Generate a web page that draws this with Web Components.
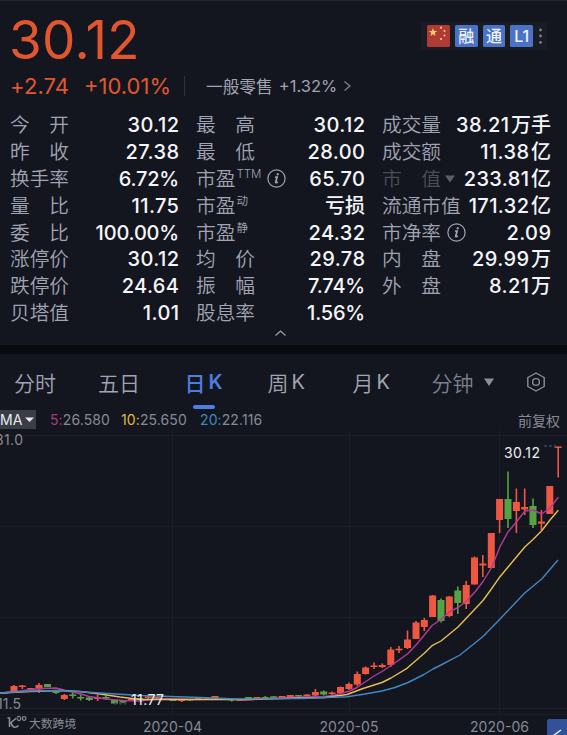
<!DOCTYPE html>
<html lang="zh-CN">
<head>
<meta charset="utf-8">
<title>30.12</title>
<style>
    html, body {
        margin: 0;
        background: #14161f;
    }
    body {
        width: 567px;
        height: 735px;
        overflow: hidden;
        font-family: Inter, "Noto Sans CJK SC", sans-serif;
        color: #a0a4b3;
    }
</style>
</head>
<body>
<stock-page></stock-page>

<template id="page">
    <style>
        :host {
            display: flex;
            flex-direction: column;
            width: 567px;
            height: 735px;
        }
        .gap {
            flex: none;
            height: 9px;
            background: #0a0b10;
        }
        .top {
            flex: none;
            height: 345px;
            box-sizing: border-box;
            border-top: 1px solid #242730;
        }
    </style>
    <div class="top">
        <quote-header price="30.12" change="+2.74" percent="+10.01%">
            <span slot="sector">一般零售</span>
            <span slot="sector-change">+1.32%</span>
            <quote-badge slot="badges" flag></quote-badge>
            <quote-badge slot="badges">融</quote-badge>
            <quote-badge slot="badges">通</quote-badge>
            <quote-badge slot="badges">L1</quote-badge>
        </quote-header>
        <stats-grid></stats-grid>
    </div>
    <div class="gap"></div>
    <period-tabs active="日K"></period-tabs>
    <ma-legend></ma-legend>
    <k-chart></k-chart>
</template>

<template id="header">
    <style>
        :host {
            display: block;
            height: 110px;
            color: #e2562f;
        }
        .row {
            display: flex;
            align-items: center;
        }
        .first {
            height: 70px;
            padding: 0 20px 0 9px;
            justify-content: space-between;
        }
        .price {
            font-size: 53px;
            letter-spacing: 0.3px;
            line-height: 70px;
            padding-top: 8px;
        }
        .badges {
            display: flex;
            align-items: center;
            gap: 5px;
            height: 28px;
            box-sizing: border-box;
            padding: 0 4px 0 6px;
            background: #1a1c24;
        }
        .second {
            height: 30px;
            padding-left: 10px;
            font-size: 22px;
        }
        .change { width: 74px; letter-spacing: 0.1px; }
        .percent { width: 100px; letter-spacing: 0; }
        .line {
            width: 1px;
            height: 20px;
            margin-right: 21px;
            background: #30333d;
        }
        .sector {
            display: flex;
            align-items: center;
            gap: 6px;
            color: #a0a4b3;
            font-size: 16.7px;
            white-space: nowrap;
        }
        .num { font-size: 16.500px; }
        .sector + svg { margin-left: 6px; }
    </style>
    <div class="row first">
        <div class="price"></div>
        <div class="badges">
            <slot name="badges"></slot>
            <svg width="5" height="18" fill="#7c7f89">
                <circle cx="2.5" cy="3" r="1.4"/><circle cx="2.5" cy="9" r="1.4"/><circle cx="2.5" cy="15.4" r="1.4"/>
            </svg>
        </div>
    </div>
    <div class="row second">
        <div class="change"></div>
        <div class="percent"></div>
        <div class="line"></div>
        <div class="sector"><slot name="sector"></slot><span class="num"><slot name="sector-change"></slot></span></div>
        <svg width="9" height="12" fill="none" stroke="#7c808c" stroke-width="1.3"><path d="M1.5 1.5 7 6 1.5 10.500"/></svg>
    </div>
</template>

<template id="badge">
    <style>
        :host {
            display: block;
            width: 22.700px;
            height: 22px;
            border-radius: 1.5px;
            background: #4a72c6;
            color: #f0f3fb;
            font-size: 16px;
            font-weight: 500;
            line-height: 22px;
            text-align: center;
        }
        :host([flag]) { background: #b03a36; }
        svg { display: none; }
        :host([flag]) svg { display: block; }
    </style>
    <slot></slot>
    <svg width="22" height="22" fill="#f2cf63">
        <path d="M6 3 7.100 6 10.200 6.100 7.700 8 8.600 11 6 9.200 3.400 11 4.300 8 1.800 6.100 4.900 6z"/>
        <circle cx="14" cy="2.700" r="1.1"/><circle cx="17.500" cy="6" r="1.1"/>
        <circle cx="17.500" cy="10.500" r="1.1"/><circle cx="14" cy="14" r="1.1"/>
    </svg>
</template>

<template id="stats">
    <style>
        :host {
            display: block;
            padding: 1px 16px 0 10px;
        }
        .grid {
            display: grid;
            grid-template-columns: repeat(3, 169px);
            column-gap: 17px;
            grid-template-rows: repeat(8, 26.800px);
            grid-auto-flow: column;
        }
        .fold {
            display: block;
            margin: 3px auto 0 264px;
        }
    </style>
    <div class="grid"></div>
    <svg class="fold" width="13" height="9" fill="none" stroke="#9a9eab" stroke-width="1.3"><path d="M1.500 6.500 6.500 2 11.500 6.500"/></svg>
</template>

<template id="stat">
    <style>
        :host {
            display: flex;
            align-items: center;
            justify-content: space-between;
            white-space: nowrap;
        }
        .name {
            display: flex;
            align-items: center;
            font-size: 19.700px;
            font-weight: 350;
            line-height: 26px;
        }
        .text { display: flex; }
        .wide .text {
            width: 59px;
            justify-content: space-between;
        }
        sup {
            align-self: flex-start;
            font-size: 11.500px;
            line-height: 16px;
            margin-left: 1px;
        }
        .value {
            display: flex;
            align-items: center;
            color: #f4f5f8;
            font-size: 20px;
            font-weight: 500;
            letter-spacing: 0.4px;
            line-height: 26px;
            margin-right: -0.4px;
        }
        .percent {
            letter-spacing: -0.2px;
            margin-right: 0;
        }
        .unit {
            letter-spacing: 0;
            margin-left: 1.500px;
            margin-right: 0.400px;
        }
        .info { margin-left: 6px; }
        .dim { color: #4b4e5a; }
        .arrow { margin-left: 4px; }
    </style>
    <div class="name"><span class="text"></span></div>
    <div class="value"></div>
</template>

<template id="tabs">
    <style>
        :host {
            display: grid;
            flex: none;
            grid-template-columns: 84px 86.500px 83px 85px 79px 94px 20px;
            align-items: center;
            height: 55px;
            padding-left: 14px;
            font-size: 21px;
            font-weight: 350;
        }
        .tab {
            display: flex;
            align-items: center;
            position: relative;
            height: 55px;
            white-space: nowrap;
        }
        .tab i {
            font-style: normal;
            font-weight: 400;
            font-size: 20px;
            margin-left: 3px;
        }
        .active {
            color: #4d7de0;
            font-weight: 500;
        }
        .active i { font-weight: 600; }
        .active::after {
            content: "";
            position: absolute;
            left: 8px;
            bottom: 0;
            width: 22px;
            height: 4px;
            border-radius: 2px;
            background: #4d7de0;
        }
        .more { color: #7c808d; }
        .more svg { margin-left: 10px; }
    </style>
</template>

<template id="legend">
    <style>
        :host {
            display: flex;
            flex: none;
            align-items: center;
            height: 21px;
            font-size: 14px;
            color: #868a97;
            letter-spacing: 0.1px;
        }
        .pick {
            display: flex;
            align-items: center;
            width: 36px;
            height: 19px;
            margin-right: 14px;
            background: #3a3d45;
            color: #e8e9ed;
            letter-spacing: 0;
        }
        .pick svg { margin-left: 3px; }
        .ma { white-space: nowrap; }
        .right {
            margin: 0 7px 0 auto;
            letter-spacing: 0;
        }
    </style>
    <div class="pick">MA<svg width="9" height="6" fill="#e8e9ed"><path d="M0 .5H9L4.500 5z"/></svg></div>
    <div class="right">前复权</div>
</template>

<template id="chart">
    <style>
        :host {
            display: block;
            flex: none;
            height: 305px;
        }
        svg { display: block; }
        text { font-family: Inter, "Noto Sans CJK SC", sans-serif; }
        .grid { stroke: #1b1e27; }
        .axis { fill: #858995; font-size: 14px; }
        .mark { fill: #eeeff3; font-size: 14px; }
        .logo { fill: #888b93; }
    </style>
    <svg width="567" height="305" viewBox="0 430 567 305">
        <g class="grid">
            <path d="M0 435.500H567M0 526.500H567M0 617.500H567M0 708.500H567M0 714.500H567"/>
            <path d="M172.500 430V714M349.500 430V714M499.500 430V714"/>
        </g>
        <g class="candles"></g>
        <g class="lines" fill="none" stroke-width="1.4" stroke-linejoin="round"></g>
        <text class="axis" x="-5" y="445" textLength="28">31.0</text>
        <text class="axis" x="-3" y="709" textLength="24">11.5</text>
        <text class="axis" x="143" y="732" textLength="59">2020-04</text>
        <text class="axis" x="319.500" y="732" textLength="59">2020-05</text>
        <text class="axis" x="470" y="732" textLength="59">2020-06</text>
        <text class="mark" x="504" y="457.500" textLength="36">30.12</text>
        <text class="mark" x="131" y="705" textLength="33">11.77</text>
        <g fill="#33415f"><circle cx="545.500" cy="446" r="1.300"/><circle cx="550.500" cy="446" r="1.300"/><circle cx="555" cy="446" r="1.300"/></g>
        <g fill="#2d5044"><circle cx="115.500" cy="703.500" r="1.200"/><circle cx="120.500" cy="703.500" r="1.200"/><circle cx="125" cy="703.500" r="1.200"/></g>
        <g fill="none" stroke="#888b93" stroke-width="1.600">
            <path d="M7.500 718H9.500V727M16.500 718 11 722.500C12 727.500 15.500 728.500 18.500 725.500"/>
            <path d="M17 717.500C19 715 21.500 717 20.500 719.500 19.500 721.500 17 720.500 17.500 718.500M26 718.500C26 721 22.300 721 22.300 718.500S26 716 26 718.500" stroke-width="1.200"/>
        </g>
        <text class="logo" x="29" y="727.500" font-size="11.800">大数跨境</text>
        <path d="M547 735V721Q547 719 549 719H567V735z" fill="#31529a"/>
        <path d="M553.500 735.500 561 730" stroke="#eef1f8" stroke-width="1.500"/>
    </svg>
</template>

<script>
const info = '<svg class="info" width="19" height="19" fill="none" stroke="#a0a4b3"><circle cx="9.500" cy="9.500" r="8.600" stroke-width="1.200"/><path d="M8.100 8.200H10.100L8.700 13.200Q8.700 14.300 10.800 13.100" stroke-width="1.700"/><circle cx="10.700" cy="5.300" r=".8" fill="#a0a4b3"/></svg>';

const stats = [
    ['今 开', '30.12'], ['昨 收', '27.38'], ['换手率', '6.72%'], ['量 比', '11.75'],
    ['委 比', '100.00%'], ['涨停价', '30.12'], ['跌停价', '24.64'], ['贝塔值', '1.01'],
    ['最 高', '30.12'], ['最 低', '28.00'], ['市盈', '65.70', 'TTM', 'info'], ['市盈', '亏损', '动'],
    ['市盈', '24.32', '静'], ['均 价', '29.78'], ['振 幅', '7.74%'], ['股息率', '1.56%'],
    ['成交量', '38.21万手'], ['成交额', '11.38亿'], ['市 值', '233.81亿', '', 'menu'], ['流通市值', '171.32亿'],
    ['市净率', '2.09', '', 'info'], ['内 盘', '29.99万'], ['外 盘', '8.21万']
];

const averages = [
    ['5', '26.580', '#a8388c', 71],
    ['10', '25.650', '#e3b73f', 79],
    ['20', '22.116', '#4288bd', 70]
];

// x, body top, body bottom, wick top, wick bottom, falling
const candles = [
    [5, 692, 693.5, 692, 693.5], [14, 686, 691, 685, 692], [22.3, 685.5, 687, 685, 689],
    [30.7, 688, 689.5, 688, 689.5], [39, 685, 689.500, 683, 693], [47.5, 684, 687, 684, 687, 1],
    [56, 691.5, 693, 691.5, 694, 1], [64.3, 695, 699, 694, 700], [72.7, 694.5, 696, 692.5, 698.5, 1],
    [80.7, 697, 698.5, 694.5, 700.5, 1], [89.3, 697.5, 700, 697, 701, 1], [97.6, 697.5, 699, 694.5, 701],
    [105.900, 697, 698.5, 695.5, 700, 1], [114.5, 700, 703.5, 699.5, 704, 1], [123, 700.5, 702.5, 700, 703, 1],
    [131.4, 699, 700.5, 698, 701], [139.800, 698, 699.5, 698, 700, 1], [148.2, 696.5, 698, 696, 699],
    [156.6, 697, 698.500, 697, 699], [165, 698, 699.5, 698, 700, 1], [173, 699.5, 701, 699, 701, 1],
    [181.7, 699.5, 701, 699, 702], [190, 699, 700.5, 699, 701, 1], [198.300, 698, 699.5, 698, 700],
    [206.7, 697, 698.5, 697, 699], [215, 696, 698, 696, 698.5], [223.4, 698, 699.5, 698, 700, 1],
    [231.7, 699, 700.500, 699, 701.5, 1], [240, 699, 701, 699, 701], [248.6, 697, 699, 697, 699, 1],
    [257, 697, 698.5, 697, 699], [265.300, 697, 698.5, 696, 699, 1], [273.7, 696.3, 698, 696, 698, 1],
    [282, 696, 698, 696, 698], [290.3, 695, 697, 695, 698], [298.6, 695, 696.5, 695, 697, 1],
    [307, 694.5, 696, 694, 697], [315.4, 692, 695.500, 689, 696.5], [323.7, 691.5, 694.500, 690.5, 695.5, 1],
    [332, 692.5, 694, 691.5, 695], [340.5, 687, 693, 686.500, 693], [349, 684, 689, 682.5, 690],
    [357.3, 674, 684.5, 671.5, 686], [365.6, 667.5, 674, 666.5, 674.500], [374, 665.5, 667, 662.5, 669],
    [382.3, 665, 667, 663.5, 668], [390.8, 649.5, 665, 647, 667], [399, 648.7, 650.3, 646, 653],
    [407.5, 639.5, 648, 630.5, 649], [416, 622.5, 639, 621, 639], [424.3, 620, 627, 618, 631],
    [432.6, 595.5, 617, 595, 617], [441, 600, 621, 598.500, 622.500, 1], [449.3, 596.5, 616, 596, 617],
    [457.8, 590.5, 603, 586.5, 614, 1], [466.2, 585, 604, 581, 609], [474.5, 557.500, 584.5, 556.500, 584.5],
    [482.8, 563.500, 565.500, 555, 577], [491.3, 533, 568, 533, 568], [499.6, 499, 520, 499, 533],
    [508, 499, 519, 471.5, 528, 1], [516.4, 502, 511, 488.5, 533], [524.7, 507, 509.5, 488.5, 515],
    [533, 506, 525, 498.5, 528, 1], [541.4, 521.500, 523.700, 510, 530], [549.8, 486, 514, 486, 514],
    [558.2, 446.500, 448, 446.5, 477.5]
];

const curves = [
    ['#b23a9b', '0,693 20,691 39,688.500 56,688 64,690 72,692 81,694 89,696.500 106,699 123,700.500 140,701 160,698.500 180,699 200,699.500 225,698.500 245,700 270,698.500 300,697 325,696.500 335,695 350,691 357,687.500 374,676 382,671.500 391,665.500 399,660 408,653.500 416,645 424,635.500 432,625.500 441,619.500 450,611.500 458,607.500 466,601.500 475,592 483,581.500 491.700,567.500 500,546.700 508,532 516.700,521.500 525,511 533,510 541.700,514 550,508 558.300,497.300'],
    ['#e6be55', '0,693 30,691.500 60,690.500 80,691.500 100,694 120,697 140,699.500 170,699.500 200,699.500 250,699.500 300,698 325,697.500 347,694.500 363,688.500 382,682.500 391,678 407,668.300 424,653.500 432,645.700 441,641 458,627 475,609 483,600.500 491,589.500 500,576.700 516,557.500 525,546.700 533,539.500 541.700,530.700 550,520 558.300,510.300'],
    ['#4087c4', '0,693 30,691 60,690.500 100,693 140,695.500 200,697.500 235,699 300,698.500 347,696.700 365,694 382,691 395,687.500 408,682.500 424,674.500 433,669 441,665 460,655 483,636.500 500,619 525,592.700 541.700,579 558,560']
];

// shared base: stamps the template with the given id into an open shadow root
class BaseElement extends HTMLElement {
    constructor(id) {
        super();
        const root = this.attachShadow({ mode: 'open' });
        root.appendChild(document.getElementById(id).content.cloneNode(true));
    }

    $(selector) {
        return this.shadowRoot.querySelector(selector);
    }
}

customElements.define('quote-badge', class extends BaseElement {
    constructor() { super('badge'); }
});

customElements.define('quote-header', class extends BaseElement {
    constructor() { super('header'); }

    connectedCallback() {
        ['price', 'change', 'percent'].forEach(name => {
            this.$('.' + name).textContent = this.getAttribute(name);
        });
    }
});

customElements.define('stat-item', class extends BaseElement {
    constructor() { super('stat'); }

    set data([name, value, sup, extra]) {
        const box = this.$('.name');
        const parts = name.split(' ');
        this.$('.text').innerHTML = parts.map(p => `<span>${p}</span>`).join('');
        if (parts.length > 1) {
            box.classList.add('wide');
        }
        if (sup) {
            box.insertAdjacentHTML('beforeend', `<sup>${sup}</sup>`);
        }
        if (extra === 'info') {
            box.insertAdjacentHTML('beforeend', info);
        }
        if (extra === 'menu') {
            box.classList.add('dim');
            box.insertAdjacentHTML('beforeend', '<svg class="arrow" width="10" height="8" fill="#5b5e69"><path d="M0 .5H10L5 7.500z"/></svg>');
        }
        const target = this.$('.value');
        target.innerHTML = value.replace(/[^\d.%]+$/, '<span class="unit">$&</span>');
        if (value.endsWith('%')) {
            target.classList.add('percent');
        }
    }
});

customElements.define('stats-grid', class extends BaseElement {
    constructor() { super('stats'); }

    connectedCallback() {
        stats.forEach(row => {
            const el = document.createElement('stat-item');
            el.data = row;
            this.$('.grid').appendChild(el);
        });
    }
});

customElements.define('period-tabs', class extends BaseElement {
    constructor() { super('tabs'); }

    connectedCallback() {
        const active = this.getAttribute('active');
        let html = '';
        ['分时', '五日', '日K', '周K', '月K'].forEach(name => {
            html += `<div class="tab${name === active ? ' active' : ''}">${name.replace('K', '<i>K</i>')}</div>`;
        });
        html += '<div class="tab more">分钟<svg width="10" height="8" fill="#8b8e99"><path d="M0 .5H10L5 8z"/></svg></div>';
        html += '<svg width="20" height="20" fill="none" stroke="#8b8e99" stroke-width="1.400"><path d="M10 1 18.200 5.500V14.500L10 19 1.800 14.500V5.500z" stroke-linejoin="round"/><circle cx="10" cy="10" r="3.400"/></svg>';
        this.shadowRoot.innerHTML += html;
    }
});

customElements.define('ma-legend', class extends BaseElement {
    constructor() { super('legend'); }

    connectedCallback() {
        averages.forEach(([days, value, color, width]) => {
            const el = document.createElement('div');
            el.className = 'ma';
            el.style.width = width + 'px';
            el.innerHTML = `<span style="color:${color}">${days}:</span>${value}`;
            this.shadowRoot.insertBefore(el, this.$('.right'));
        });
    }
});

customElements.define('k-chart', class extends BaseElement {
    constructor() { super('chart'); }

    connectedCallback() {
        this.$('.candles').innerHTML = candles.map(([x, top, bottom, high, low, down]) => {
            const color = down ? '#55a344' : '#ee5741';
            return `<g fill="${color}"><rect x="${x - 3.5}" y="${top}" width="7" height="${bottom - top}"/>
                <rect x="${x - 0.8}" y="${high}" width="1.6" height="${low - high}"/></g>`;
        }).join('');
        this.$('.lines').innerHTML = curves.map(([color, points]) =>
            `<polyline stroke="${color}" points="${points}"/>`).join('');
    }
});

customElements.define('stock-page', class extends BaseElement {
    constructor() { super('page'); }
});
</script>
</body>
</html>
